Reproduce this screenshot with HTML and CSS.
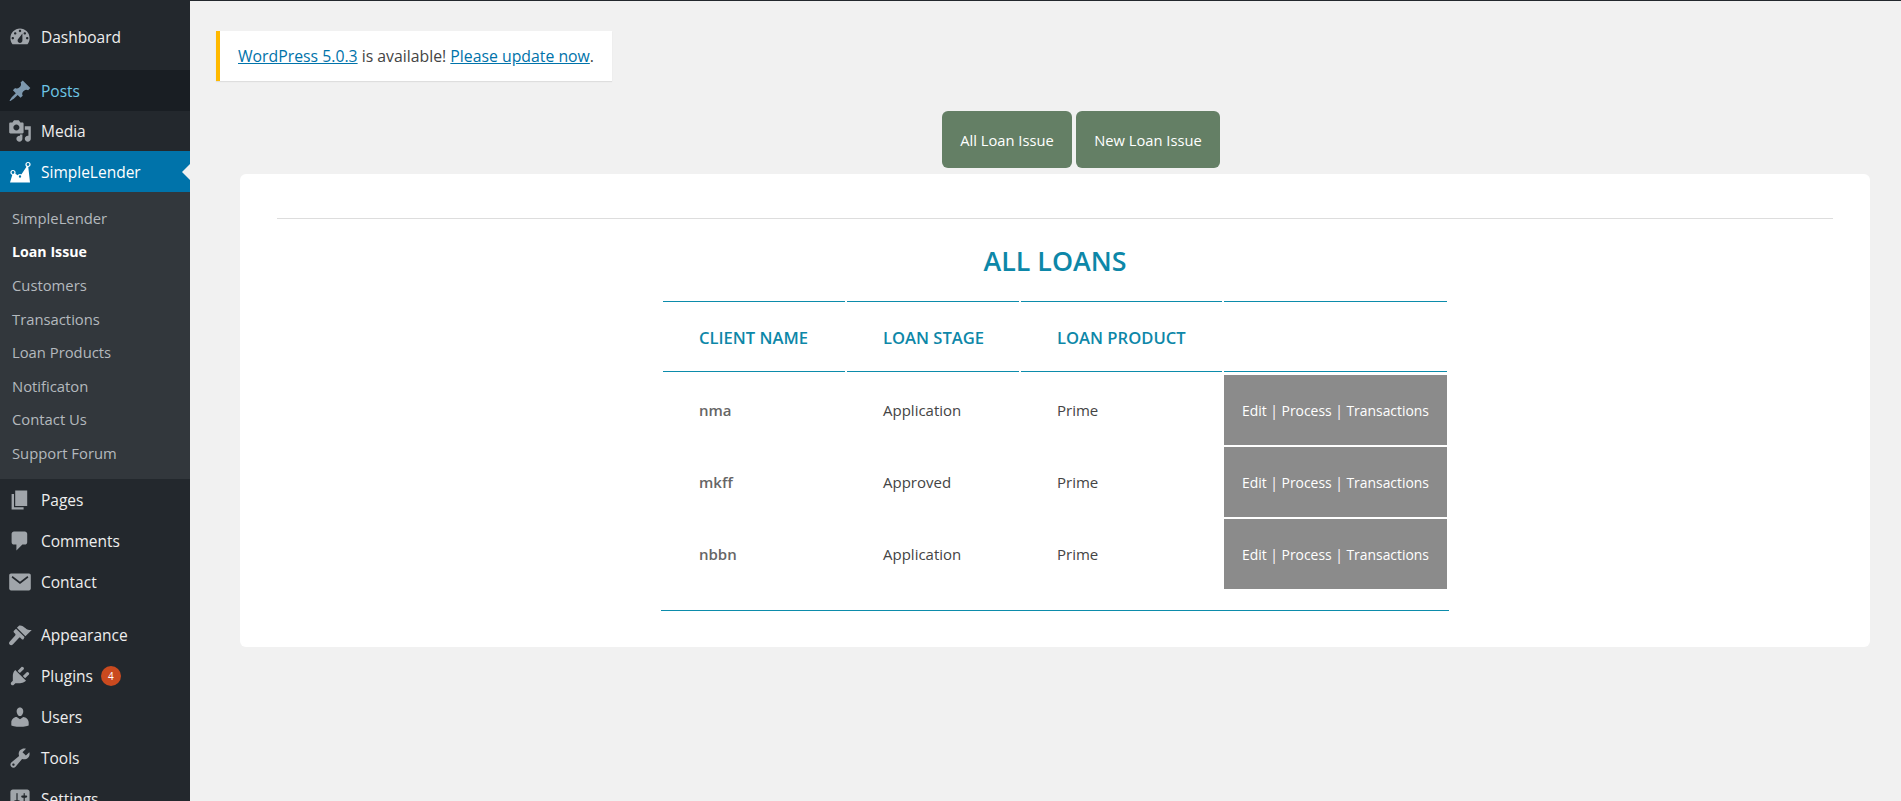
FILE: index.html
```html
<!DOCTYPE html>
<html lang="en">
<head>
<meta charset="utf-8">
<title>All Loans</title>
<link rel="stylesheet" href="styles.css">
</head>
<body>
<div class="app">
  <nav class="sidebar">
    <a class="item"><svg class="icon" viewBox="0 0 20 20"><path fill-rule="evenodd" d="M3.76 16h12.48c1.1-1.37 1.76-3.11 1.76-5 0-4.42-3.58-8-8-8s-8 3.58-8 8c0 1.89.66 3.63 1.76 5zM10 4c.55 0 1 .45 1 1s-.45 1-1 1-1-.45-1-1 .45-1 1-1zM6 6c.55 0 1 .45 1 1s-.45 1-1 1-1-.45-1-1 .45-1 1-1zm8 0c.55 0 1 .45 1 1s-.45 1-1 1-1-.45-1-1 .45-1 1-1zm-5.37 5.55L12 7v6c0 1.1-.9 2-2 2s-2-.9-2-2c0-.57.24-1.08.63-1.45zM4 10c.55 0 1 .45 1 1s-.45 1-1 1-1-.45-1-1 .45-1 1-1zm12 0c.55 0 1 .45 1 1s-.45 1-1 1-1-.45-1-1 .45-1 1-1z"/></svg>Dashboard</a>
    <div class="sep"></div>
    <a class="item hover"><svg class="icon" viewBox="0 0 20 20"><path d="M10.44 3.02l1.82-1.82 6.36 6.35-1.83 1.82c-1.05-.68-2.48-.57-3.41.36l-.75.75c-.92.93-1.04 2.35-.35 3.41l-1.83 1.82-2.41-2.41-2.8 2.79c-.42.42-3.38 2.71-3.8 2.29s1.86-3.39 2.28-3.81l2.79-2.79L4.1 9.36l1.83-1.82c1.05.69 2.48.57 3.4-.36l.75-.75c.93-.92 1.05-2.35.36-3.41z"/></svg>Posts</a>
    <a class="item"><svg class="icon" viewBox="0 0 20 20"><path fill-rule="evenodd" d="M13 11V4c0-.55-.45-1-1-1h-1.67L9 1H5L3.67 3H2c-.55 0-1 .45-1 1v7c0 .55.45 1 1 1h10c.55 0 1-.45 1-1zM7 4.500c1.38 0 2.500 1.120 2.500 2.500S8.380 9.500 7 9.500 4.500 8.380 4.500 7 5.620 4.500 7 4.500zM14 6h5v10.500c0 1.380-1.120 2.500-2.500 2.500S14 17.880 14 16.500s1.120-2.500 2.500-2.500c.17 0 .34.02.5.05V9h-3V6zm-4 8.050V13h2v3.500c0 1.380-1.120 2.500-2.500 2.500S7 17.880 7 16.500 8.120 14 9.500 14c.17 0 .34.02.5.05z"/></svg>Media</a>
    <a class="item current"><svg class="icon" viewBox="0 0 24 24"><path d="M2 22.500 5 12.500l7 4 8-12 2 18z"/><circle class="dot" cx="5" cy="12.500" r="2"/><circle class="dot" cx="12" cy="16.500" r="1.800"/><circle class="dot" cx="20" cy="4.500" r="2"/></svg>SimpleLender</a>
    <div class="submenu">
      <a class="sub">SimpleLender</a>
      <a class="sub active">Loan Issue</a>
      <a class="sub">Customers</a>
      <a class="sub">Transactions</a>
      <a class="sub">Loan Products</a>
      <a class="sub">Notificaton</a>
      <a class="sub">Contact Us</a>
      <a class="sub">Support Forum</a>
    </div>
    <a class="item"><svg class="icon" viewBox="0 0 20 20"><path d="M6 15V2h10v13H6zm-1 1h8v2H3V5h2v11z"/></svg>Pages</a>
    <a class="item"><svg class="icon" viewBox="0 0 20 20"><path d="M5 2h9c1.100 0 2 .9 2 2v7c0 1.100-.9 2-2 2h-2l-5 5v-5H5c-1.100 0-2-.9-2-2V4c0-1.100.9-2 2-2z"/></svg>Comments</a>
    <a class="item"><svg class="icon" viewBox="0 0 20 20"><path fill-rule="evenodd" d="M2.500 3h15c.8 0 1.500.7 1.500 1.500v11c0 .8-.7 1.500-1.500 1.500h-15C1.700 17 1 16.300 1 15.500v-11C1 3.700 1.700 3 2.500 3zM17 6.200 16.200 5 10 9.700 3.800 5 3 6.200l7 5.500z"/></svg>Contact</a>
    <div class="sep"></div>
    <a class="item"><svg class="icon" viewBox="0 0 20 20"><path d="M14.480 11.060L7.410 3.990l1.500-1.500c.5-.56 2.300-.47 3.510.32 1.210.8 1.430 1.280 2.910 2.100 1.180.64 2.450 1.260 4.450.85zm-.71.71L6.700 4.700 4.930 6.470c-.39.39-.39 1.020 0 1.410l1.060 1.060c.39.39.39 1.030 0 1.420L1.500 15.400c-.8.8-.8 1.900-.1 2.600s1.800.7 2.600-.1l5.050-5.500c.39-.39 1.030-.39 1.420 0l1.060 1.060c.39.39 1.020.39 1.410 0z"/></svg>Appearance</a>
    <a class="item"><svg class="icon" viewBox="0 0 20 20"><path d="M13.110 4.360L9.870 7.600 8 5.730l3.240-3.240c.35-.34 1.050-.2 1.560.32.52.51.66 1.210.31 1.550zm-8 1.770l.91-1.120 9.010 9.010-1.190.84c-.71.71-2.630 1.160-3.820 1.160H6.140L4.900 17.260c-.59.59-1.540.59-2.120 0-.59-.58-.59-1.530 0-2.120l1.240-1.240v-3.880c0-1.130.4-3.190 1.090-3.890zm7.260 3.970l3.240-3.240c.34-.35 1.040-.21 1.550.31.52.51.66 1.210.31 1.550l-3.240 3.250z"/></svg>Plugins<span class="badge">4</span></a>
    <a class="item"><svg class="icon" viewBox="0 0 20 20"><path d="M10 9.250c-2.270 0-2.730-3.440-2.730-3.440C7 4.020 7.820 2 9.970 2c2.160 0 2.980 2.020 2.710 3.810 0 0-.41 3.440-2.680 3.440zm0 2.570L12.720 10c2.390 0 4.520 2.330 4.520 4.530v2.490s-3.650 1.130-7.240 1.130c-3.650 0-7.240-1.130-7.240-1.130v-2.490c0-2.250 1.940-4.480 4.470-4.480z"/></svg>Users</a>
    <a class="item"><svg class="icon" viewBox="0 0 20 20"><path fill-rule="evenodd" d="M16.680 9.770c-1.340 1.340-3.300 1.670-4.950.99l-5.410 6.520c-.99.99-2.590.99-3.580 0s-.99-2.590 0-3.570l6.520-5.420c-.68-1.650-.35-3.610.99-4.950 1.280-1.280 3.120-1.620 4.720-1.060l-2.890 2.890 2.820 2.820 2.860-2.870c.53 1.580.18 3.390-1.080 4.670zM3.810 16.210c.4.39 1.040.39 1.430 0 .4-.4.4-1.040 0-1.430-.39-.4-1.030-.4-1.430 0-.39.39-.39 1.030 0 1.430z"/></svg>Tools</a>
    <a class="item"><svg class="icon" viewBox="0 0 20 20"><path fill-rule="evenodd" d="M18 16V4c0-1.100-.9-2-2-2H4c-1.100 0-2 .9-2 2v12c0 1.100.9 2 2 2h12c1.100 0 2-.9 2-2zM8 11h1c.55 0 1 .45 1 1s-.45 1-1 1H8v1.500c0 .28-.22.5-.5.5s-.5-.22-.5-.5V13H6c-.55 0-1-.45-1-1s.45-1 1-1h1V5.500c0-.28.22-.5.5-.5s.5.22.5.5V11zm5-2h-1c-.55 0-1-.45-1-1s.45-1 1-1h1V5.500c0-.28.22-.5.5-.5s.5.22.5.5V7h1c.55 0 1 .45 1 1s-.45 1-1 1h-1v5.500c0 .28-.22.5-.5.5s-.5-.22-.5-.5V9z"/></svg>Settings</a>
  </nav>
  <main class="content">
    <div class="notice"><a class="link">WordPress 5.0.3</a> is available! <a class="link">Please update now</a>.</div>
    <div class="toolbar">
      <a class="btn btn-all">All Loan Issue</a>
      <a class="btn btn-new">New Loan Issue</a>
    </div>
    <section class="card">
      <hr class="rule">
      <h2 class="title">ALL LOANS</h2>
      <table class="loans">
        <colgroup><col class="c1"><col class="c2"><col class="c3"><col class="c4"></colgroup>
        <thead>
          <tr><th>CLIENT NAME</th><th>LOAN STAGE</th><th>LOAN PRODUCT</th><th></th></tr>
        </thead>
        <tbody>
          <tr><td class="name">nma</td><td>Application</td><td>Prime</td><td class="actions">Edit | Process | Transactions</td></tr>
          <tr><td class="name">mkff</td><td>Approved</td><td>Prime</td><td class="actions">Edit | Process | Transactions</td></tr>
          <tr><td class="name">nbbn</td><td>Application</td><td>Prime</td><td class="actions">Edit | Process | Transactions</td></tr>
        </tbody>
      </table>
    </section>
  </main>
</div>
</body>
</html>
```
FILE: styles.css
```css
* { box-sizing: border-box; }
html, body { margin: 0; height: 801px; overflow: hidden; }
body { background: #f1f1f1; font-family: "Open Sans", "Noto Sans", sans-serif; font-size: 14px; color: #444; }
.app { display: flex; height: 801px; }
.sidebar { width: 190px; flex: none; height: 801px; overflow: hidden; background: #23282d; padding-top: 16px; }
.item { display: flex; align-items: center; height: 40.8px; padding: 1px 0 0 8px; color: #eee; font-size: 15.5px; position: relative; }
.icon { width: 24px; height: 24px; margin-right: 9px; fill: #a0a5aa; flex: none; }
.dot { fill: #0073aa; stroke: #fff; stroke-width: 1.2; }
.sep { height: 13px; }
.hover { background: #191e23; color: #6ec6e6; }
.hover .icon { fill: #7d98ae; }
.current { background: #0073aa; color: #fff; }
.current .icon { fill: #fff; }
.current::after { content: ""; position: absolute; right: 0; top: 50%; margin-top: -8px; border: 8px solid transparent; border-right-color: #f1f1f1; border-left-width: 0; }
.submenu { background: #32373c; padding: 9.5px 0 4px; height: 287px; }
.sub { display: flex; align-items: center; height: 33.5px; padding-left: 12px; font-size: 14.8px; color: #b4b9be; }
.active { color: #fff; font-weight: 700; font-size: 14.2px; }
.badge { margin-left: 8px; width: 20px; height: 20px; border-radius: 50%; background: #ca4a1f; color: #fff; font-size: 10px; display: flex; align-items: center; justify-content: center; }
.content { flex: 1; min-width: 0; border-top: 1px solid #23282d; padding-top: 30px; }
.notice { width: 396px; height: 50px; margin-left: 26px; background: #fff; border-left: 4px solid #ffb900; box-shadow: 0 1px 1px rgba(0,0,0,.08); padding-left: 18px; display: flex; align-items: center; white-space: pre-wrap; font-size: 15.8px; }
.link { color: #0073aa; text-decoration: underline; }
.toolbar { display: flex; gap: 4px; margin: 30px 0 0 752px; }
.btn { height: 57px; display: flex; align-items: center; justify-content: center; background: #647f65; border-radius: 6px; color: #fff; font-size: 14.7px; }
.btn-all { width: 130px; }
.btn-new { width: 144px; }
.card { margin: 6px 31px 0 50px; height: 473px; background: #fff; border-radius: 6px; padding: 44px 37px 0; }
.rule { margin: 0; border: 0; border-top: 1px solid #ddd; height: 0; }
.title { margin: 24px 0 0; height: 56px; text-align: center; color: #0d87a8; font-size: 26.8px; font-weight: 600; line-height: 36px; }
.loans { width: 788px; margin: 0 auto; border-collapse: separate; border-spacing: 2px; border-bottom: 1px solid #0c8cab; padding-bottom: 19px; table-layout: fixed; }
.c1 { width: 182px; } .c2 { width: 172px; } .c3 { width: 201px; } .c4 { width: 223px; }
th { height: 72px; padding: 0 0 0 36px; text-align: left; color: #0d87a8; font-size: 16.6px; font-weight: 600; border-top: 1px solid #0c8cab; background: linear-gradient(#0c8cab, #0c8cab) 0 69px / 100% 1px no-repeat; }
td { height: 70px; padding: 0 0 0 36px; font-size: 15px; color: #444; }
.name { font-weight: 600; color: #666; }
.actions { background: #8b8b8b; color: #fff; padding: 0; text-align: center; font-size: 13.9px; }
```
